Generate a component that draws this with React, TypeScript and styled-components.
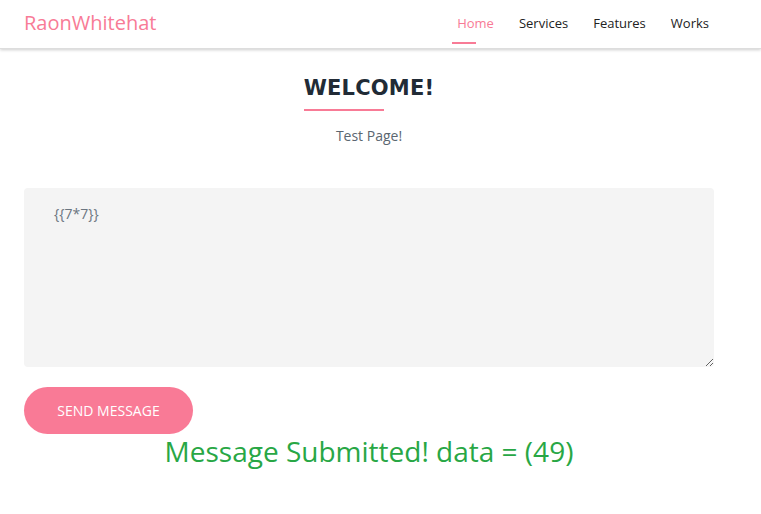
import React from "react";
import styled, { createGlobalStyle } from "styled-components";

const Global = createGlobalStyle`
  html, body { margin: 0; padding: 0; background: #fff; }
  body { font-family: "Open Sans", "Liberation Sans", sans-serif; }
  * { box-sizing: border-box; }
`;

const NavBar = styled.header`
  height: 49px;
  background: #fff;
  box-shadow: 0 1px 3px rgba(0,0,0,0.2);
  border-bottom: 1px solid #ddd;
  display: flex;
  align-items: center;
  justify-content: space-between;
  padding: 0 40px 0 24px;
`;

const Logo = styled.div`
  font-size: 20px;
  color: #f87b96;
  margin-top: -3px;
`;

const NavList = styled.nav`
  display: flex;
  align-items: stretch;
  height: 100%;
`;

const NavLink = styled.a<{ $active?: boolean }>`
  position: relative;
  display: flex;
  align-items: center;
  padding: 0 12px 0 13px;
  font-size: 13px;
  color: ${(p) => (p.$active ? "#f87b96" : "#222")};
  text-decoration: none;
  margin-top: -2px;
  &::after {
    content: "";
    display: ${(p) => (p.$active ? "block" : "none")};
    position: absolute;
    left: 8px;
    bottom: 4px;
    width: 24px;
    height: 2px;
    background: #f87b96;
  }
`;

const Main = styled.main`
  width: 690px;
  margin-left: 24px;
  display: flex;
  flex-direction: column;
`;

const Header = styled.div`
  display: flex;
  flex-direction: column;
  align-items: center;
  padding-top: 27px;
`;

const Title = styled.h2`
  margin: 0;
  font-family: "DejaVu Sans", sans-serif;
  font-weight: 700;
  font-size: 21px;
  letter-spacing: 0.2px;
  color: #212b36;
  position: relative;
  padding-bottom: 12px;
  &::after {
    content: "";
    position: absolute;
    left: 0;
    bottom: 1px;
    width: 80px;
    height: 2px;
    background: #f87b96;
  }
`;

const Subtitle = styled.p`
  margin: 14px 0 0;
  font-size: 14px;
  color: #5b6670;
`;

const TextArea = styled.textarea`
  margin-top: 43px;
  width: 690px;
  height: 179px;
  background: #f4f4f4;
  border: none;
  border-radius: 4px;
  padding: 16px 30px;
  font-family: "Open Sans", "Liberation Sans", sans-serif;
  font-size: 14px;
  color: #6b7580;
  resize: vertical;
  outline: none;
  display: block;
`;

const SendButton = styled.button`
  margin-top: 20px;
  width: 169px;
  height: 47px;
  border: none;
  border-radius: 24px;
  background: #f97a96;
  color: #fff;
  font-family: "Open Sans", "Liberation Sans", sans-serif;
  font-size: 14px;
  text-transform: uppercase;
  cursor: pointer;
`;

const Result = styled.div`
  text-align: center;
  font-size: 28px;
  color: #28a745;
  margin-top: -2px;
  line-height: 38px;
`;

export default function App() {
  return (
    <>
      <Global />
      <NavBar>
        <Logo>RaonWhitehat</Logo>
        <NavList>
          <NavLink $active>Home</NavLink>
          <NavLink>Services</NavLink>
          <NavLink>Features</NavLink>
          <NavLink>Works</NavLink>
        </NavList>
      </NavBar>
      <Main>
        <Header>
          <Title>WELCOME!</Title>
          <Subtitle>Test Page!</Subtitle>
        </Header>
        <TextArea defaultValue="{{7*7}}" />
        <div>
          <SendButton>Send Message</SendButton>
        </div>
        <Result>Message Submitted! data = (49)</Result>
      </Main>
    </>
  );
}
